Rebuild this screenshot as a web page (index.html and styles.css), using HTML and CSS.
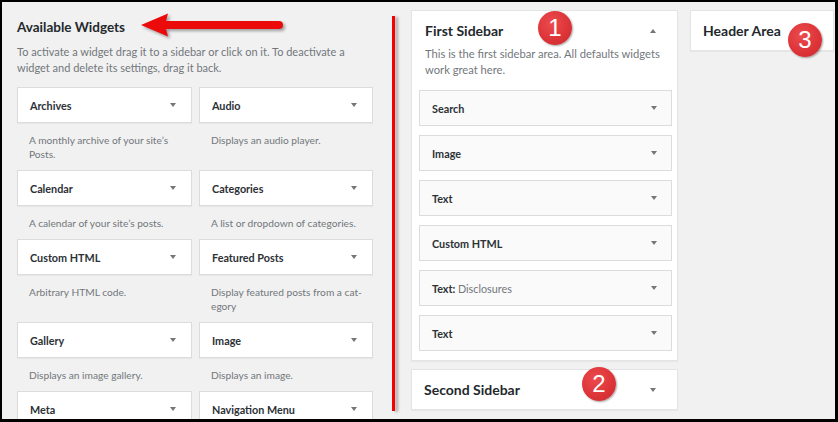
FILE: index.html
```html
<!DOCTYPE html>
<html lang="en">
<head>
<meta charset="utf-8">
<title>Widgets</title>
<link rel="stylesheet" href="styles.css">
</head>
<body>
<div class="screen">
  <section class="available">
    <h2 class="avail-title">Available Widgets</h2>
    <p class="avail-desc">To activate a widget drag it to a sidebar or click on it. To deactivate a<br>widget and delete its settings, drag it back.</p>
    <div class="widget-grid">
      <div class="widget-item"><div class="tile"><span>Archives</span><i class="caret"></i></div><p class="wdesc">A monthly archive of your site’s<br>Posts.</p></div>
      <div class="widget-item"><div class="tile"><span>Audio</span><i class="caret"></i></div><p class="wdesc">Displays an audio player.</p></div>
      <div class="widget-item"><div class="tile"><span>Calendar</span><i class="caret"></i></div><p class="wdesc">A calendar of your site’s posts.</p></div>
      <div class="widget-item"><div class="tile"><span>Categories</span><i class="caret"></i></div><p class="wdesc">A list or dropdown of categories.</p></div>
      <div class="widget-item"><div class="tile"><span>Custom HTML</span><i class="caret"></i></div><p class="wdesc">Arbitrary HTML code.</p></div>
      <div class="widget-item"><div class="tile"><span>Featured Posts</span><i class="caret"></i></div><p class="wdesc">Display featured posts from a cat-<br>egory</p></div>
      <div class="widget-item"><div class="tile"><span>Gallery</span><i class="caret"></i></div><p class="wdesc">Displays an image gallery.</p></div>
      <div class="widget-item"><div class="tile"><span>Image</span><i class="caret"></i></div><p class="wdesc">Displays an image.</p></div>
      <div class="widget-item"><div class="tile"><span>Meta</span><i class="caret"></i></div></div>
      <div class="widget-item"><div class="tile"><span>Navigation Menu</span><i class="caret"></i></div></div>
    </div>
  </section>

  <div class="divider"></div>

  <section class="sidebar-col">
    <div class="panel">
      <div class="panel-head"><h3>First Sidebar</h3><i class="caret up"></i></div>
      <p class="panel-desc">This is the first sidebar area. All defaults widgets<br>work great here.</p>
      <div class="inner-list">
        <div class="inner-tile"><span>Search</span><i class="caret"></i></div>
        <div class="inner-tile"><span>Image</span><i class="caret"></i></div>
        <div class="inner-tile"><span>Text</span><i class="caret"></i></div>
        <div class="inner-tile"><span>Custom HTML</span><i class="caret"></i></div>
        <div class="inner-tile"><span>Text: <em class="sub">Disclosures</em></span><i class="caret"></i></div>
        <div class="inner-tile"><span>Text</span><i class="caret"></i></div>
      </div>
    </div>
    <div class="panel closed">
      <div class="panel-head"><h3>Second Sidebar</h3><i class="caret"></i></div>
    </div>
  </section>

  <section class="right-col">
    <div class="panel closed header-panel">
      <div class="panel-head"><h3>Header Area</h3></div>
    </div>
  </section>

  <svg class="arrow" width="154" height="34" viewBox="0 0 154 34" aria-hidden="true">
    <line x1="26" y1="13" x2="141" y2="13" stroke="#ec0b0b" stroke-width="8" stroke-linecap="round"/>
    <polygon points="3,13 30,1.5 27,13 30,24.5" fill="#ec0b0b"/>
  </svg>

  <span class="badge b1">1</span>
  <span class="badge b2">2</span>
  <span class="badge b3">3</span>
</div>
</body>
</html>
```

FILE: styles.css
```css
* { box-sizing: border-box; }

html, body {
  margin: 0;
  padding: 0;
  background: #000;
}

body {
  width: 838px;
  height: 422px;
  overflow: hidden;
  font-family: Lato, "Open Sans", "Liberation Sans", sans-serif;
  color: #23282d;
}

.screen {
  position: relative;
  margin: 2px 3px 3px 2px;
  height: 417px;
  background: #f1f1f1;
  overflow: hidden;
  display: flex;
  align-items: flex-start;
}

/* ---------- Available widgets ---------- */
.available {
  flex: 0 0 auto;
  width: 371px;
  padding: 16px 0 0 15px;
}

.avail-title {
  margin: 0;
  font-size: 13.5px;
  line-height: 18px;
  font-weight: 700;
  color: #23282d;
}

.avail-desc {
  margin: 8px 0 0 0;
  font-size: 11px;
  line-height: 16px;
  color: #72777c;
  white-space: nowrap;
}

.widget-grid {
  margin-top: 11px;
  display: grid;
  grid-template-columns: 175px 174px;
  column-gap: 7px;
}

.tile {
  height: 36px;
  background: #fff;
  border: 1px solid #dcdcde;
  box-shadow: 0 1px 1px rgba(0, 0, 0, 0.04);
  display: flex;
  align-items: center;
  justify-content: space-between;
  padding: 0 15px 0 12px;
  font-size: 10.8px;
  font-weight: 700;
  color: #2c3136;
}

.wdesc {
  margin: 0;
  padding: 10px 0 9px 12px;
  font-size: 10.2px;
  line-height: 14px;
  color: #72777c;
  white-space: nowrap;
}

.caret {
  display: block;
  width: 0;
  height: 0;
  border-left: 3px solid transparent;
  border-right: 3px solid transparent;
  border-top: 4px solid #72777c;
}

.caret.up {
  border-top: 0;
  border-bottom: 4px solid #72777c;
}

/* ---------- Divider ---------- */
.divider {
  flex: 0 0 auto;
  width: 3px;
  height: 395px;
  margin: 14px 0 0 19px;
  background: #f30000;
  box-shadow: 3px 1px 3px rgba(0, 0, 0, 0.3);
}

/* ---------- Sidebar column ---------- */
.sidebar-col {
  flex: 0 0 auto;
  width: 267px;
  margin: 8px 0 0 16px;
  display: flex;
  flex-direction: column;
  gap: 8px;
}

.panel {
  background: #fff;
  border: 1px solid #e2e4e7;
  box-shadow: 0 1px 1px rgba(0, 0, 0, 0.04);
  padding: 0 5px 9px 7px;
}

.panel-head {
  display: flex;
  align-items: center;
  justify-content: space-between;
  padding: 11px 16px 0 6px;
}

.panel-head h3 {
  margin: 0;
  font-size: 14px;
  line-height: 18px;
  font-weight: 700;
  color: #23282d;
}

.panel-desc {
  margin: 6px 0 0 0;
  padding-left: 6px;
  font-size: 11.2px;
  line-height: 16px;
  color: #72777c;
  white-space: nowrap;
}

.inner-list {
  margin-top: 12px;
  display: flex;
  flex-direction: column;
  gap: 9px;
}

.inner-tile {
  height: 36px;
  background: #fafafa;
  border: 1px solid #dcdcde;
  display: flex;
  align-items: center;
  justify-content: space-between;
  padding: 0 14px 0 12px;
  font-size: 10.8px;
  font-weight: 700;
  color: #2c3136;
}

.inner-tile .sub {
  font-style: normal;
  font-weight: 400;
  color: #72777c;
}

.panel.closed {
  height: 41px;
  padding: 0 5px 0 7px;
  display: flex;
  flex-direction: column;
  justify-content: center;
}

.panel.closed .panel-head {
  padding: 0 16px 0 5px;
}

/* ---------- Right column ---------- */
.right-col {
  flex: 1 1 auto;
  margin: 8px 1px 0 12px;
}

.header-panel {
  height: 40px;
}

.header-panel .panel-head {
  padding: 0 0 0 5px;
}

/* ---------- Annotations ---------- */
.arrow {
  position: absolute;
  left: 136px;
  top: 10px;
  overflow: visible;
  filter: drop-shadow(2px 2px 1.5px rgba(0, 0, 0, 0.35));
}

.badge {
  position: absolute;
  width: 34px;
  height: 34px;
  border-radius: 50%;
  background: radial-gradient(circle at 40% 35%, #ec4b4e 0%, #dd3539 55%, #c9292d 100%);
  box-shadow: 1px 1px 2px rgba(0, 0, 0, 0.35);
  color: #fff;
  font-family: "Liberation Sans", Arial, sans-serif;
  font-size: 24px;
  line-height: 34px;
  text-align: center;
}

.b1 { left: 536px; top: 9px; }
.b2 { left: 580px; top: 365px; }
.b3 { left: 786px; top: 21px; }
```
